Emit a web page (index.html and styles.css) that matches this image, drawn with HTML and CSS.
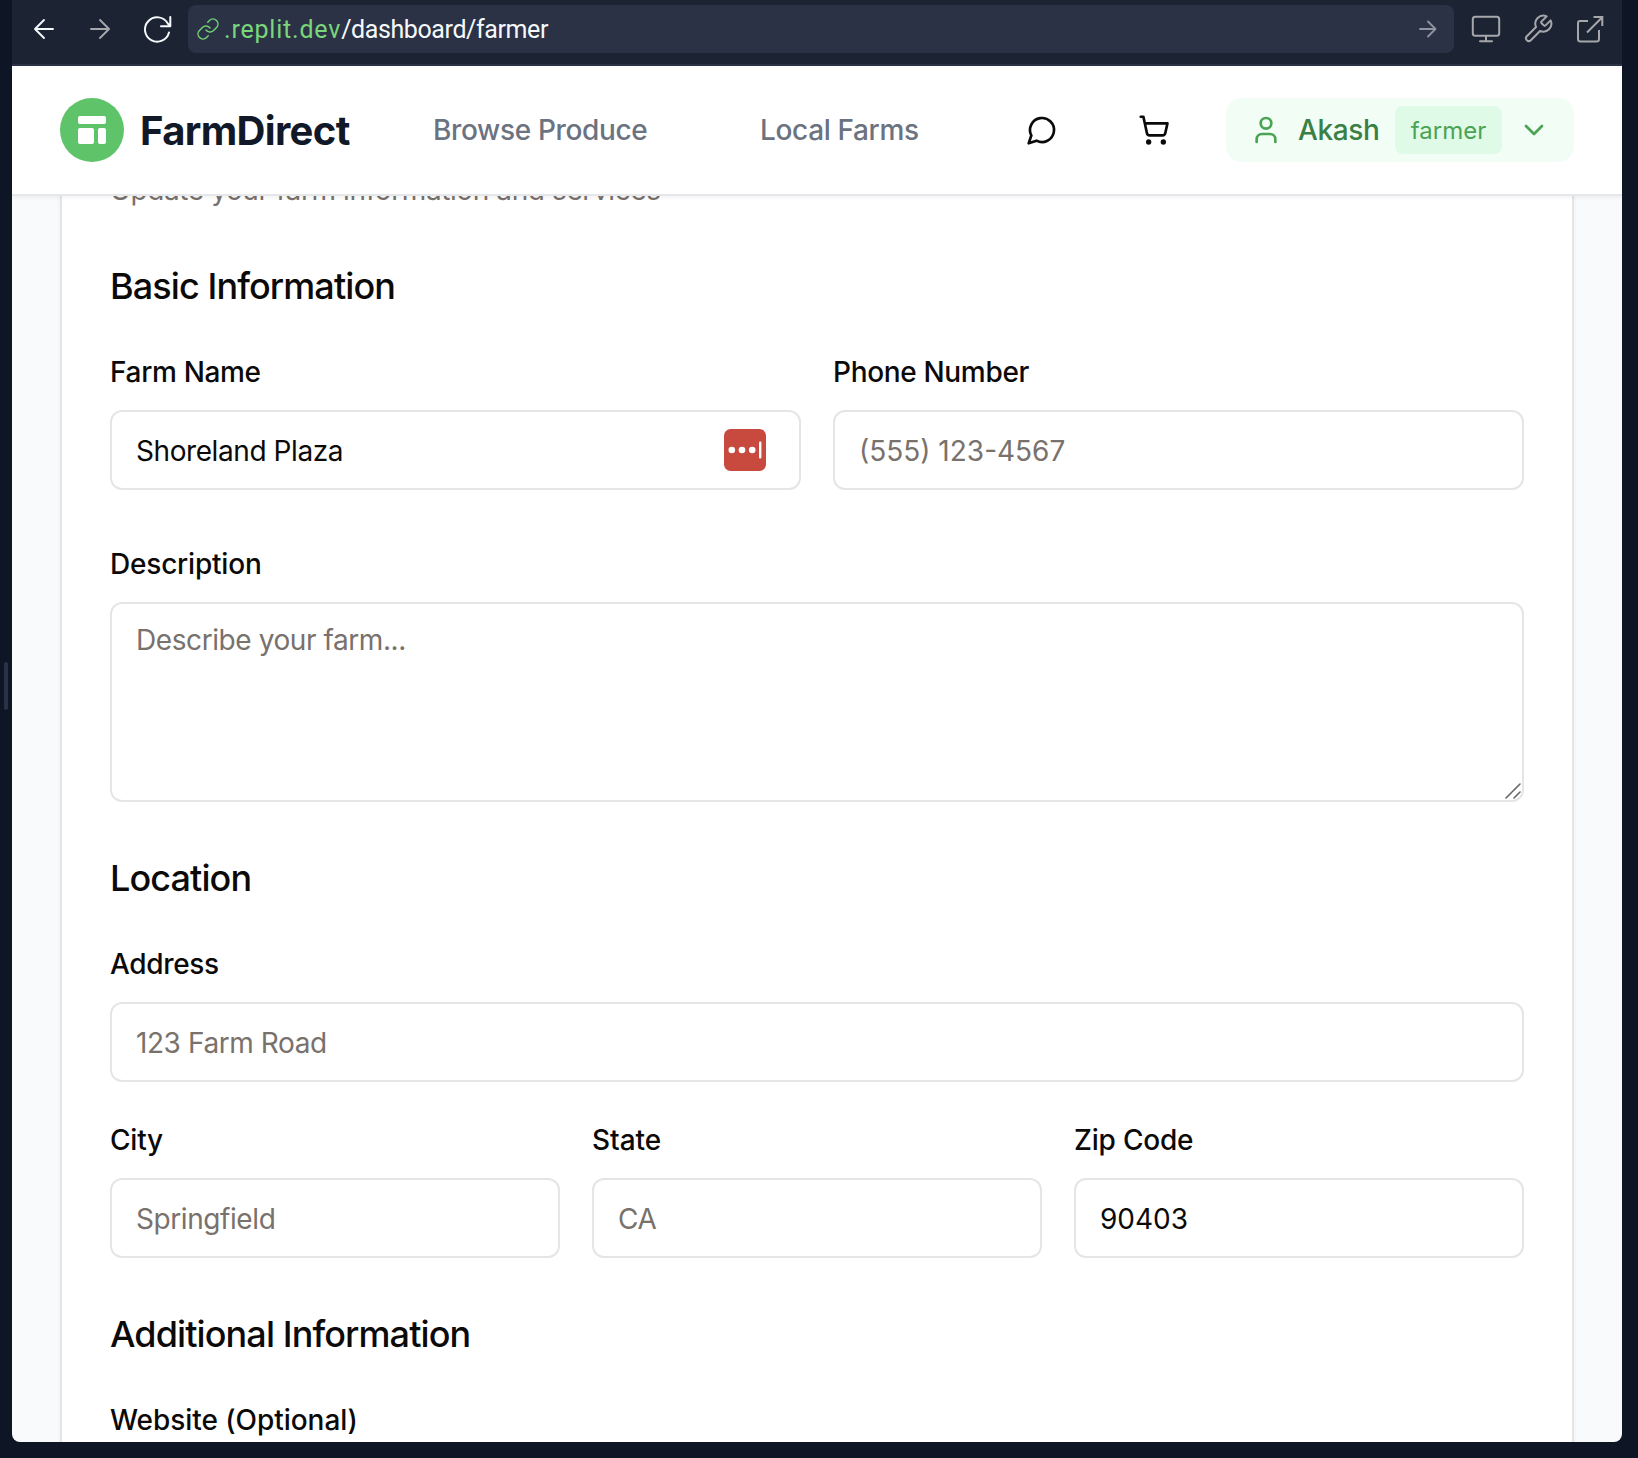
FILE: index.html
```html
<!DOCTYPE html>
<html lang="en">
<head>
<meta charset="utf-8">
<title>FarmDirect</title>
<link rel="stylesheet" href="styles.css">
</head>
<body>
<div class="pane-handle"></div>
<div class="frame">
  <div class="toolbar">
    <svg class="tool back" viewBox="0 0 24 24"><path d="M21 12H3.500M12 3l-9 9 9 9"/></svg>
    <svg class="tool forward" viewBox="0 0 24 24"><path d="M3 12h17.500M12 3l9 9-9 9"/></svg>
    <svg class="tool reload" viewBox="0 0 32 32"><path d="M28 19.500A12.200 12.200 0 1 1 26.700 10.300L29 13M29.300 4v9.200H20"/></svg>
    <div class="address">
      <svg class="link-icon" viewBox="0 0 24 24"><path d="M10 13a5 5 0 0 0 7.540.54l3-3a5 5 0 0 0-7.070-7.070l-1.720 1.710"/><path d="M14 11a5 5 0 0 0-7.540-.54l-3 3a5 5 0 0 0 7.070 7.070l1.710-1.710"/></svg>
      <span class="url"><span class="host">.replit.dev</span>/dashboard/farmer</span>
      <svg class="go" viewBox="0 0 18 18"><path d="M1 9h15M9 1.500L16.500 9 9 16.500"/></svg>
    </div>
    <svg class="tool monitor" viewBox="0 0 30 30"><rect x="1.800" y="2.800" width="26.400" height="19" rx="2.500"/><path d="M15 22v5M9 27.200h12"/></svg>
    <svg class="tool wrench" viewBox="0 0 24 24"><path d="M14.700 6.300a1 1 0 0 0 0 1.400l1.600 1.600a1 1 0 0 0 1.400 0l3.770-3.770a6 6 0 0 1-7.940 7.940l-6.910 6.910a2.120 2.120 0 0 1-3-3l6.910-6.910a6 6 0 0 1 7.940-7.940l-3.760 3.760z"/></svg>
    <svg class="tool external" viewBox="0 0 28 28"><path d="M12 6H4a2 2 0 0 0-2 2v16a2.500 2.500 0 0 0 2.500 2.500h16A2.500 2.500 0 0 0 23 24v-9M11 17.500L26 2.500M17.500 2H26.300v9"/></svg>
  </div>

  <header class="site-header">
    <div class="brand">
      <span class="brand-mark"><svg viewBox="0 0 28 28"><rect width="28" height="8" rx="2"/><rect y="12" width="16" height="16" rx="2"/><rect x="20" y="12" width="8" height="16" rx="2"/></svg></span>
      <span class="brand-name">FarmDirect</span>
    </div>
    <nav class="nav">
      <a>Browse Produce</a>
      <a>Local Farms</a>
    </nav>
    <svg class="icon chat" viewBox="0 0 24 24"><path d="M7.900 20A9 9 0 1 0 4 16.100L2 22Z"/></svg>
    <svg class="icon cart" viewBox="0 0 24 24"><circle cx="8" cy="21" r="1"/><circle cx="19" cy="21" r="1"/><path d="M2.050 2.050h2l2.660 12.420a2 2 0 0 0 2 1.580h9.780a2 2 0 0 0 1.950-1.570l1.650-7.430H5.120"/></svg>
    <div class="account">
      <svg class="icon" viewBox="0 0 24 24"><path d="M19 21v-2a4 4 0 0 0-4-4H9a4 4 0 0 0-4 4v2"/><circle cx="12" cy="7" r="4"/></svg>
      <span class="account-name">Akash</span>
      <span class="role">farmer</span>
      <svg class="icon" viewBox="0 0 24 24"><path d="m6 9 6 6 6-6"/></svg>
    </div>
  </header>

  <main class="page">
    <form class="card">
      <p class="subtitle">Update your farm information and services</p>

      <h2>Basic Information</h2>
      <div class="row two">
        <div class="field">
          <label class="snug">Farm Name</label>
          <div class="control">
            <input type="text" value="Shoreland Plaza">
            <svg class="autofill" viewBox="0 0 42 42"><rect width="42" height="42" rx="6.500" fill="#c84a3f"/><g fill="#fff"><circle cx="7.800" cy="21" r="3.300"/><circle cx="18" cy="21" r="3.300"/><circle cx="28.200" cy="21" r="3.300"/><rect x="35" y="12.500" width="2.400" height="17" rx="1"/></g></svg>
          </div>
        </div>
        <div class="field">
          <label class="snug">Phone Number</label>
          <input class="numeric" type="text" placeholder="(555) 123-4567">
        </div>
      </div>
      <div class="field description">
        <label>Description</label>
        <div class="control">
          <textarea placeholder="Describe your farm..."></textarea>
          <svg class="grip" viewBox="0 0 16 16"><path d="M1 15L15 1M9 15l6-6"/></svg>
        </div>
      </div>

      <h2>Location</h2>
      <div class="field">
        <label class="snug">Address</label>
        <input type="text" placeholder="123 Farm Road">
      </div>
      <div class="row three">
        <div class="field"><label>City</label><input type="text" placeholder="Springfield"></div>
        <div class="field"><label class="loose">State</label><input type="text" placeholder="CA"></div>
        <div class="field"><label>Zip Code</label><input class="numeric" type="text" value="90403"></div>
      </div>

      <h2>Additional Information</h2>
      <div class="field">
        <label class="loose">Website (Optional)</label>
        <input type="text">
      </div>
    </form>
  </main>
</div>
</body>
</html>
```
FILE: styles.css
```css
* { box-sizing: border-box; }

body {
  margin: 0;
  height: 1458px;
  overflow: hidden;
  display: flex;
  background: #0e1525;
  font-family: Inter, "Liberation Sans", sans-serif;
  color: #0c0a09;
}

svg { display: block; flex: none; fill: none; stroke-linecap: round; stroke-linejoin: round; }

.pane-handle {
  width: 4px;
  height: 48px;
  margin: 662px 4px 0;
  border-radius: 2px;
  background: #2b3245;
}

.frame {
  width: 1610px;
  height: 1442px;
  display: flex;
  flex-direction: column;
  overflow: hidden;
  border-radius: 0 0 8px 8px;
  background: #f9fafc;
}

/* Browser toolbar */
.toolbar {
  flex: none;
  height: 66px;
  padding: 5px 18px 0 20px;
  display: flex;
  align-items: flex-start;
  background: #1c2333;
  border-bottom: 2px solid #2b3245;
}

.tool { height: 48px; stroke: #a5a7ab; stroke-width: 1.9; }
.back { width: 24px; stroke: #f5f9fc; }
.forward { width: 24px; margin-left: 32px; }
.reload { width: 32px; margin-left: 29px; stroke: #f5f9fc; stroke-width: 2; }
.monitor { width: 30px; margin-left: 17px; stroke-width: 2; }
.wrench { width: 32px; margin-left: 21px; stroke-width: 1.5; }
.external { width: 28px; margin-left: 22px; stroke-width: 2; stroke-linecap: butt; stroke-linejoin: miter; }

.address {
  width: 1266px;
  height: 48px;
  margin-left: 15px;
  padding: 0 17px 0 8px;
  display: flex;
  align-items: center;
  border-radius: 8px;
  background: #2b3245;
}

.link-icon { width: 24px; height: 24px; stroke: #72d075; stroke-width: 1.5; }
.url { margin-left: 4px; padding-top: 1px; font: 25px Roboto, sans-serif; letter-spacing: -0.4px; color: #f5f9fc; }
.host { letter-spacing: 0.8px; color: #7ad67a; }
.go { width: 18px; height: 18px; margin-left: auto; stroke: #9194a0; stroke-width: 1.8; }

/* Site header */
.site-header {
  position: relative;
  z-index: 1;
  flex: none;
  height: 130px;
  padding: 0 48px;
  display: flex;
  align-items: center;
  background: #fff;
  border-bottom: 2px solid #e5e7eb;
  box-shadow: 0 2px 4px rgba(0, 0, 0, 0.05);
}

.brand { width: 373px; display: flex; align-items: center; gap: 16px; }
.brand-mark {
  width: 64px;
  height: 64px;
  display: grid;
  place-items: center;
  border-radius: 50%;
  background: #5fc36a;
}
.brand-mark svg { width: 28px; height: 28px; fill: #fff; }
.brand-name { font-size: 40px; font-weight: 700; letter-spacing: -0.65px; color: #111827; }

.nav { width: 593px; display: flex; font-size: 28px; font-weight: 500; letter-spacing: -0.35px; color: #6b7280; white-space: nowrap; }
.nav a { width: 327px; }
.nav a:last-child { width: auto; }

.icon { width: 32px; height: 32px; stroke: currentColor; stroke-width: 2; }
.cart { margin-left: 80px; }

.account {
  width: 348px;
  height: 64px;
  margin-left: 56px;
  padding: 0 24px;
  display: flex;
  align-items: center;
  justify-content: space-between;
  border-radius: 16px;
  background: #f1fdf5;
  color: #4ba354;
}
.account-name { width: 81px; font-size: 28px; font-weight: 500; letter-spacing: -0.4px; color: #3a8044; }
.role {
  width: 107px;
  height: 48px;
  border-radius: 8px;
  background: #e0fae8;
  font-size: 24px;
  line-height: 50px;
  text-align: center;
}

/* Farm profile form */
.page { flex: 1; min-height: 0; padding: 0 48px; overflow: hidden; display: flex; flex-direction: column; }
.card {
  flex: none;
  margin-top: -40px;
  padding: 14px 48px 48px;
  background: #fff;
  border: 2px solid #e7e5e4;
  border-top: 0;
  box-shadow: 0 2px 4px rgba(0, 0, 0, 0.05);
}
.subtitle { margin: 0; font-size: 28px; line-height: 40px; letter-spacing: -0.4px; color: #78716c; }

h2 { margin: 48px 0 44px; font-size: 36px; font-weight: 550; line-height: 56px; letter-spacing: -0.9px; }

.row { display: grid; column-gap: 32px; }
.two { grid-template-columns: 1fr 1fr; }
.three { grid-template-columns: 1fr 1fr 1fr; margin-top: 44px; }
.field { display: flex; flex-direction: column; gap: 24px; min-width: 0; }
.description { margin-top: 60px; }

label { font-size: 28px; font-weight: 500; line-height: 28px; letter-spacing: -0.2px; }
label.snug { letter-spacing: -0.33px; }
label.loose { letter-spacing: -0.05px; }

.control { position: relative; display: flex; }
input, textarea {
  width: 100%;
  height: 80px;
  padding: 18px 24px 16px;
  border: 2px solid #e5e5e5;
  border-radius: 12px;
  background: #fff;
  font: 28px/40px Inter, "Liberation Sans", sans-serif;
  letter-spacing: -0.42px;
  color: #0c0a09;
  outline: 0;
}
textarea { height: 200px; padding-top: 16px; resize: none; }
.numeric { letter-spacing: 0; }
::placeholder { color: #78716c; opacity: 1; }

.autofill { position: absolute; top: 19px; right: 35px; width: 42px; height: 42px; }
.grip { position: absolute; right: 3px; bottom: 3px; width: 16px; height: 16px; stroke: #666; stroke-width: 1.6; }
```
